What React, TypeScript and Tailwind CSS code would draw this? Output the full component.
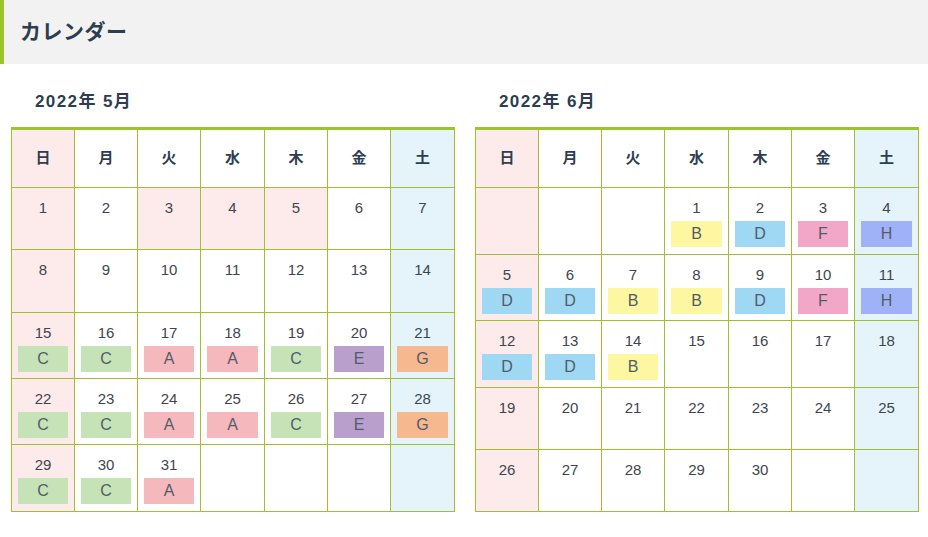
import React from 'react'

type Day = { d?: number; tag?: string; pink?: boolean }

const TAG_BG: Record<string, string> = {
  A: 'bg-[#f5b9bd]',
  B: 'bg-[#fdf7a1]',
  C: 'bg-[#c6e3b7]',
  D: 'bg-[#9fd8f3]',
  E: 'bg-[#b9a0cc]',
  F: 'bg-[#f3a7c8]',
  G: 'bg-[#f6b88f]',
  H: 'bg-[#9fb2f8]',
}

const WEEK = ['日', '月', '火', '水', '木', '金', '土']

const may: Day[][] = [
  [{ d: 1 }, { d: 2 }, { d: 3, pink: true }, { d: 4, pink: true }, { d: 5, pink: true }, { d: 6 }, { d: 7 }],
  [{ d: 8 }, { d: 9 }, { d: 10 }, { d: 11 }, { d: 12 }, { d: 13 }, { d: 14 }],
  [{ d: 15, tag: 'C' }, { d: 16, tag: 'C' }, { d: 17, tag: 'A' }, { d: 18, tag: 'A' }, { d: 19, tag: 'C' }, { d: 20, tag: 'E' }, { d: 21, tag: 'G' }],
  [{ d: 22, tag: 'C' }, { d: 23, tag: 'C' }, { d: 24, tag: 'A' }, { d: 25, tag: 'A' }, { d: 26, tag: 'C' }, { d: 27, tag: 'E' }, { d: 28, tag: 'G' }],
  [{ d: 29, tag: 'C' }, { d: 30, tag: 'C' }, { d: 31, tag: 'A' }, {}, {}, {}, {}],
]

const june: Day[][] = [
  [{}, {}, {}, { d: 1, tag: 'B' }, { d: 2, tag: 'D' }, { d: 3, tag: 'F' }, { d: 4, tag: 'H' }],
  [{ d: 5, tag: 'D' }, { d: 6, tag: 'D' }, { d: 7, tag: 'B' }, { d: 8, tag: 'B' }, { d: 9, tag: 'D' }, { d: 10, tag: 'F' }, { d: 11, tag: 'H' }],
  [{ d: 12, tag: 'D' }, { d: 13, tag: 'D' }, { d: 14, tag: 'B' }, { d: 15 }, { d: 16 }, { d: 17 }, { d: 18 }],
  [{ d: 19 }, { d: 20 }, { d: 21 }, { d: 22 }, { d: 23 }, { d: 24 }, { d: 25 }],
  [{ d: 26 }, { d: 27 }, { d: 28 }, { d: 29 }, { d: 30 }, {}, {}],
]

// row heights as measured; rows with tags are a few pixels taller
const MAY_ROWS = ['h-[61px]', 'h-[62px]', 'h-[65px]', 'h-[65px]', 'h-[66px]']
const JUNE_ROWS = ['h-[66px]', 'h-[65px]', 'h-[66px]', 'h-[61px]', 'h-[61px]']

function cellBg(col: number, pink?: boolean) {
  if (col === 0 || pink) return 'bg-[#fdeaea]'
  if (col === 6) return 'bg-[#e4f4fa]'
  return 'bg-white'
}

// grid lines come from the green background showing through 1px gaps;
// whole-pixel columns keep the lines crisp
const COLS = 'grid grid-cols-[62px_62px_62px_63px_62px_62px_63px] gap-px'

function Month({ title, weeks, rows }: { title: string; weeks: Day[][]; rows: string[] }) {
  return (
    <div className="w-[444px]">
      <div className="mt-[28px] mb-[15px] pl-6 text-[17px] leading-5 tracking-[1.4px] font-bold text-[#2c3e50]">{title}</div>
      <div className="border-t-[3px] border-[#9dc42c] bg-[#a0c032] px-px pb-px flex flex-col gap-px">
        <div className={`${COLS} h-[57px]`}>
          {WEEK.map((w, i) => (
            <div
              key={w}
              className={`flex items-center justify-center text-[15px] font-bold text-[#2c3e50] ${cellBg(i)}`}
            >
              {w}
            </div>
          ))}
        </div>
        {weeks.map((row, r) => (
          <div key={r} className={`${COLS} ${rows[r]}`}>
            {row.map((c, i) => (
              <div key={i} className={`flex flex-col items-center pt-[11px] ${cellBg(i, c.pink)}`}>
                {c.d && <div className="text-[15px] leading-[18px] text-[#3d4650]">{c.d}</div>}
                {c.tag && (
                  <div
                    className={`mt-[4px] self-stretch mx-[6px] h-[26px] flex items-center justify-center text-[16px] text-[#525c68] ${TAG_BG[c.tag]}`}
                  >
                    {c.tag}
                  </div>
                )}
              </div>
            ))}
          </div>
        ))}
      </div>
    </div>
  )
}

export default function App() {
  return (
    <div
      className="w-[928px] h-[537px] bg-white"
      style={{ fontFamily: '"Liberation Sans", Arial, "Noto Sans CJK JP", sans-serif' }}
    >
      <div className="h-[64px] bg-[#f2f2f2] border-l-4 border-[#9cc42b] pl-4 flex items-center text-[21px] tracking-[0.5px] font-bold text-[#2c3e50]">
        カレンダー
      </div>
      <div className="flex gap-5 pl-[11px]">
        <Month title="2022年 5月" weeks={may} rows={MAY_ROWS} />
        <Month title="2022年 6月" weeks={june} rows={JUNE_ROWS} />
      </div>
    </div>
  )
}
